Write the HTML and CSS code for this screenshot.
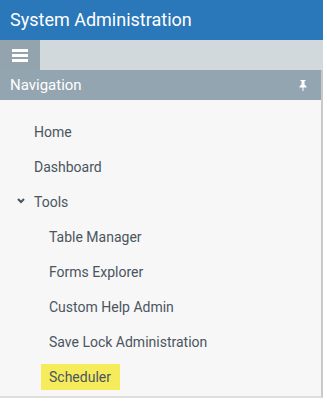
FILE: index.html
```html
<!DOCTYPE html>
<html lang="en">
<head>
  <meta charset="UTF-8" />
  <meta name="viewport" content="width=device-width, initial-scale=1.0" />
  <title>System Administration</title>
  <link rel="stylesheet" href="styles.css">
</head>
<body>
  <div class="app">
    <header class="topbar">System Administration</header>

    <div class="toolbar">
      <button class="menu-btn" aria-label="Menu">
        <span></span><span></span><span></span>
      </button>
    </div>

    <!-- Navigation panel -->
    <section class="panel">
      <div class="panel-head">
        <span>Navigation</span>
        <svg class="pin" width="8" height="11" viewBox="0 0 8 11">
          <path d="M1.5 0h5v1h-1v3.5l2 2v1h-3v3.5h-1v-3.5h-3v-1l2-2v-3.5h-1z" fill="#fff"/>
        </svg>
      </div>
      <ul class="nav">
        <li class="nav-item">Home</li>
        <li class="nav-item">Dashboard</li>
        <li class="nav-item group">
          <svg class="chevron" width="8" height="6" viewBox="0 0 8 6">
            <path d="M1 1l3 3 3-3" fill="none" stroke="#4a5560" stroke-width="2"/>
          </svg>
          Tools
        </li>
        <li class="nav-item sub">Table Manager</li>
        <li class="nav-item sub">Forms Explorer</li>
        <li class="nav-item sub">Custom Help Admin</li>
        <li class="nav-item sub">Save Lock Administration</li>
        <li class="nav-item sub"><span class="highlight">Scheduler</span></li>
      </ul>
    </section>
  </div>
</body>
</html>
```

FILE: styles.css
```css
* {
  box-sizing: border-box;
  font-family: 'Roboto', 'Liberation Sans', sans-serif;
}

html, body {
  margin: 0;
  padding: 0;
  background-color: #fff;
}

.app {
  width: 323px;
}

.topbar {
  height: 40px;
  line-height: 40px;
  padding-left: 10px;
  background-color: #2a77ba;
  color: #fff;
  font-size: 18px;
}

.toolbar {
  height: 30px;
  background-color: #d1d9dd;
  display: flex;
}

.menu-btn {
  width: 40px;
  height: 30px;
  border: none;
  padding: 0;
  background-color: #93a4af;
  display: flex;
  flex-direction: column;
  align-items: center;
  justify-content: center;
  gap: 2px;
}

.menu-btn span {
  width: 16px;
  height: 3px;
  background-color: #fff;
}

.panel {
  width: 323px;
  border-right: 2px solid #c9c9c9;
  border-bottom: 2px solid #dedede;
  background-color: #f7f7f7;
  padding-bottom: 2px;
}

.panel-head {
  height: 30px;
  padding: 0 14px 0 10px;
  background-color: #93a5b0;
  color: #fff;
  font-size: 15px;
  display: flex;
  align-items: center;
  justify-content: space-between;
}

.nav {
  list-style: none;
  margin: 0;
  padding: 14px 0 0;
}

.nav-item {
  height: 35px;
  padding-left: 34px;
  display: flex;
  align-items: center;
  font-size: 14px;
  color: #4a5560;
  position: relative;
}

.nav-item.sub {
  padding-left: 41px;
}

.nav-item.sub:not(:last-child) {
  padding-left: 49px;
}

.chevron {
  position: absolute;
  left: 17px;
  top: 14px;
}

.highlight {
  display: inline-block;
  height: 26px;
  line-height: 26px;
  padding: 0 9px 0 8px;
  background-color: #f6ec5b;
}
```
